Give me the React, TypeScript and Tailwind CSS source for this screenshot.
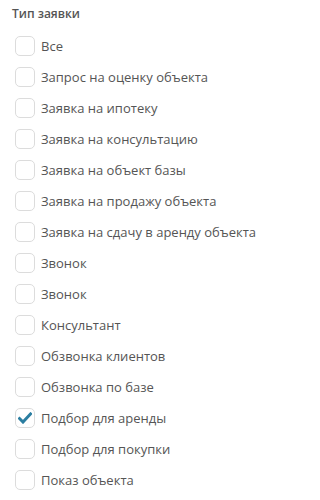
import { useState } from "react";

const items = [
  "Все",
  "Запрос на оценку объекта",
  "Заявка на ипотеку",
  "Заявка на консультацию",
  "Заявка на объект базы",
  "Заявка на продажу объекта",
  "Заявка на сдачу в аренду объекта",
  "Звонок",
  "Звонок",
  "Консультант",
  "Обзвонка клиентов",
  "Обзвонка по базе",
  "Подбор для аренды",
  "Подбор для покупки",
  "Показ объекта",
];

export default function App() {
  const [checked, setChecked] = useState<number[]>([12]);

  const toggle = (i: number) => {
    setChecked((c) => (c.includes(i) ? c.filter((x) => x !== i) : [...c, i]));
  };

  return (
    <div className="w-[302px] h-[500px] bg-white overflow-hidden font-['Open_Sans',sans-serif] text-[#555]">
      <div className="pl-[12px] pt-[5px]">
        <h3 className="text-[12px] font-semibold leading-[18px] text-[#555]">Тип заявки</h3>
        <ul className="mt-[7px] pl-[3px]">
          {items.map((label, i) => (
            <li
              key={i}
              className="flex items-center h-[31px] cursor-pointer"
              onClick={() => toggle(i)}
            >
              <span className="w-[20px] h-[20px] rounded-[5px] border border-[#dcdcdc] bg-white flex items-center justify-center shrink-0">
                {checked.includes(i) && (
                  <svg width="14" height="12" viewBox="0 0 14 12">
                    <path
                      d="M1.5 6.5 L5 10 L12.5 2"
                      fill="none"
                      stroke="#2b7ea1"
                      strokeWidth="3"
                      strokeLinecap="square"
                    />
                  </svg>
                )}
              </span>
              <span className="ml-[6px] text-[13px] leading-[18px] whitespace-nowrap">{label}</span>
            </li>
          ))}
        </ul>
      </div>
    </div>
  );
}
